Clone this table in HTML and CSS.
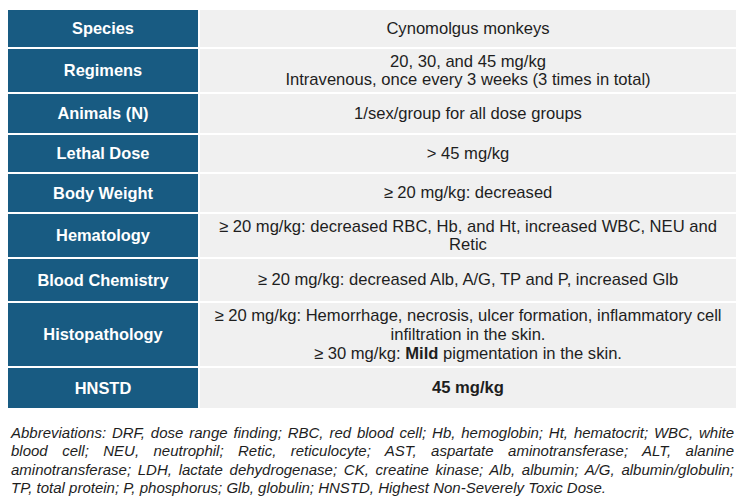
FILE: index.html
```html
<!DOCTYPE html>
<html>
<head>
<meta charset="utf-8">
<link rel="stylesheet" href="styles.css">
</head>
<body>
<div class="page">
  <div class="table">
    <div class="label">Species</div>
    <div class="value"><span>Cynomolgus monkeys</span></div>
    <div class="label">Regimens</div>
    <div class="value"><span>20, 30, and 45 mg/kg<br>Intravenous, once every 3 weeks (3 times in total)</span></div>
    <div class="label">Animals (N)</div>
    <div class="value"><span>1/sex/group for all dose groups</span></div>
    <div class="label">Lethal Dose</div>
    <div class="value"><span>&gt; 45 mg/kg</span></div>
    <div class="label">Body Weight</div>
    <div class="value"><span>≥ 20 mg/kg: decreased</span></div>
    <div class="label">Hematology</div>
    <div class="value"><span>≥ 20 mg/kg: decreased RBC, Hb, and Ht, increased WBC, NEU and<br>Retic</span></div>
    <div class="label">Blood Chemistry</div>
    <div class="value"><span>≥ 20 mg/kg: decreased Alb, A/G, TP and P, increased Glb</span></div>
    <div class="label">Histopathology</div>
    <div class="value tall"><span>≥ 20 mg/kg: Hemorrhage, necrosis, ulcer formation, inflammatory cell<br>infiltration in the skin.<br>≥ 30 mg/kg: <b>Mild</b> pigmentation in the skin.</span></div>
    <div class="label">HNSTD</div>
    <div class="value"><span><b>45 mg/kg</b></span></div>
  </div>
  <p class="note">Abbreviations: DRF, dose range finding; RBC, red blood cell; Hb, hemoglobin; Ht, hematocrit; WBC, white blood cell; NEU, neutrophil; Retic, reticulocyte; AST, aspartate aminotransferase; ALT, alanine aminotransferase; LDH, lactate dehydrogenase; CK, creatine kinase; Alb, albumin; A/G, albumin/globulin; TP, total protein; P, phosphorus; Glb, globulin; HNSTD, Highest Non-Severely Toxic Dose.</p>
</div>
</body>
</html>
```

FILE: styles.css
```css
html, body {
  margin: 0;
  padding: 0;
  background: #ffffff;
}
.page {
  width: 750px;
  height: 500px;
  padding: 10px 14px 0 8px;
  box-sizing: border-box;
  font-family: "Liberation Sans", Arial, sans-serif;
}
.table {
  display: grid;
  grid-template-columns: 190px 1fr;
  grid-template-rows: 37px 43px 39px 37px 38px 43px 42px 63px 40px;
  column-gap: 2px;
  row-gap: 2px;
}
.label {
  background: #185b82;
  color: #ffffff;
  font-weight: bold;
  font-size: 16.4px;
  display: flex;
  align-items: center;
  justify-content: center;
  text-align: center;
}
.value {
  background: #f0f0f0;
  color: #1e1e1e;
  font-size: 16.6px;
  line-height: 18px;
  display: flex;
  align-items: center;
  justify-content: center;
  text-align: center;
}
.value.tall {
  line-height: 19px;
}
.note {
  margin: 16px 2px 0 3px;
  font-size: 15px;
  line-height: 18.3px;
  font-style: italic;
  color: #1e1e1e;
  text-align: justify;
}
```
